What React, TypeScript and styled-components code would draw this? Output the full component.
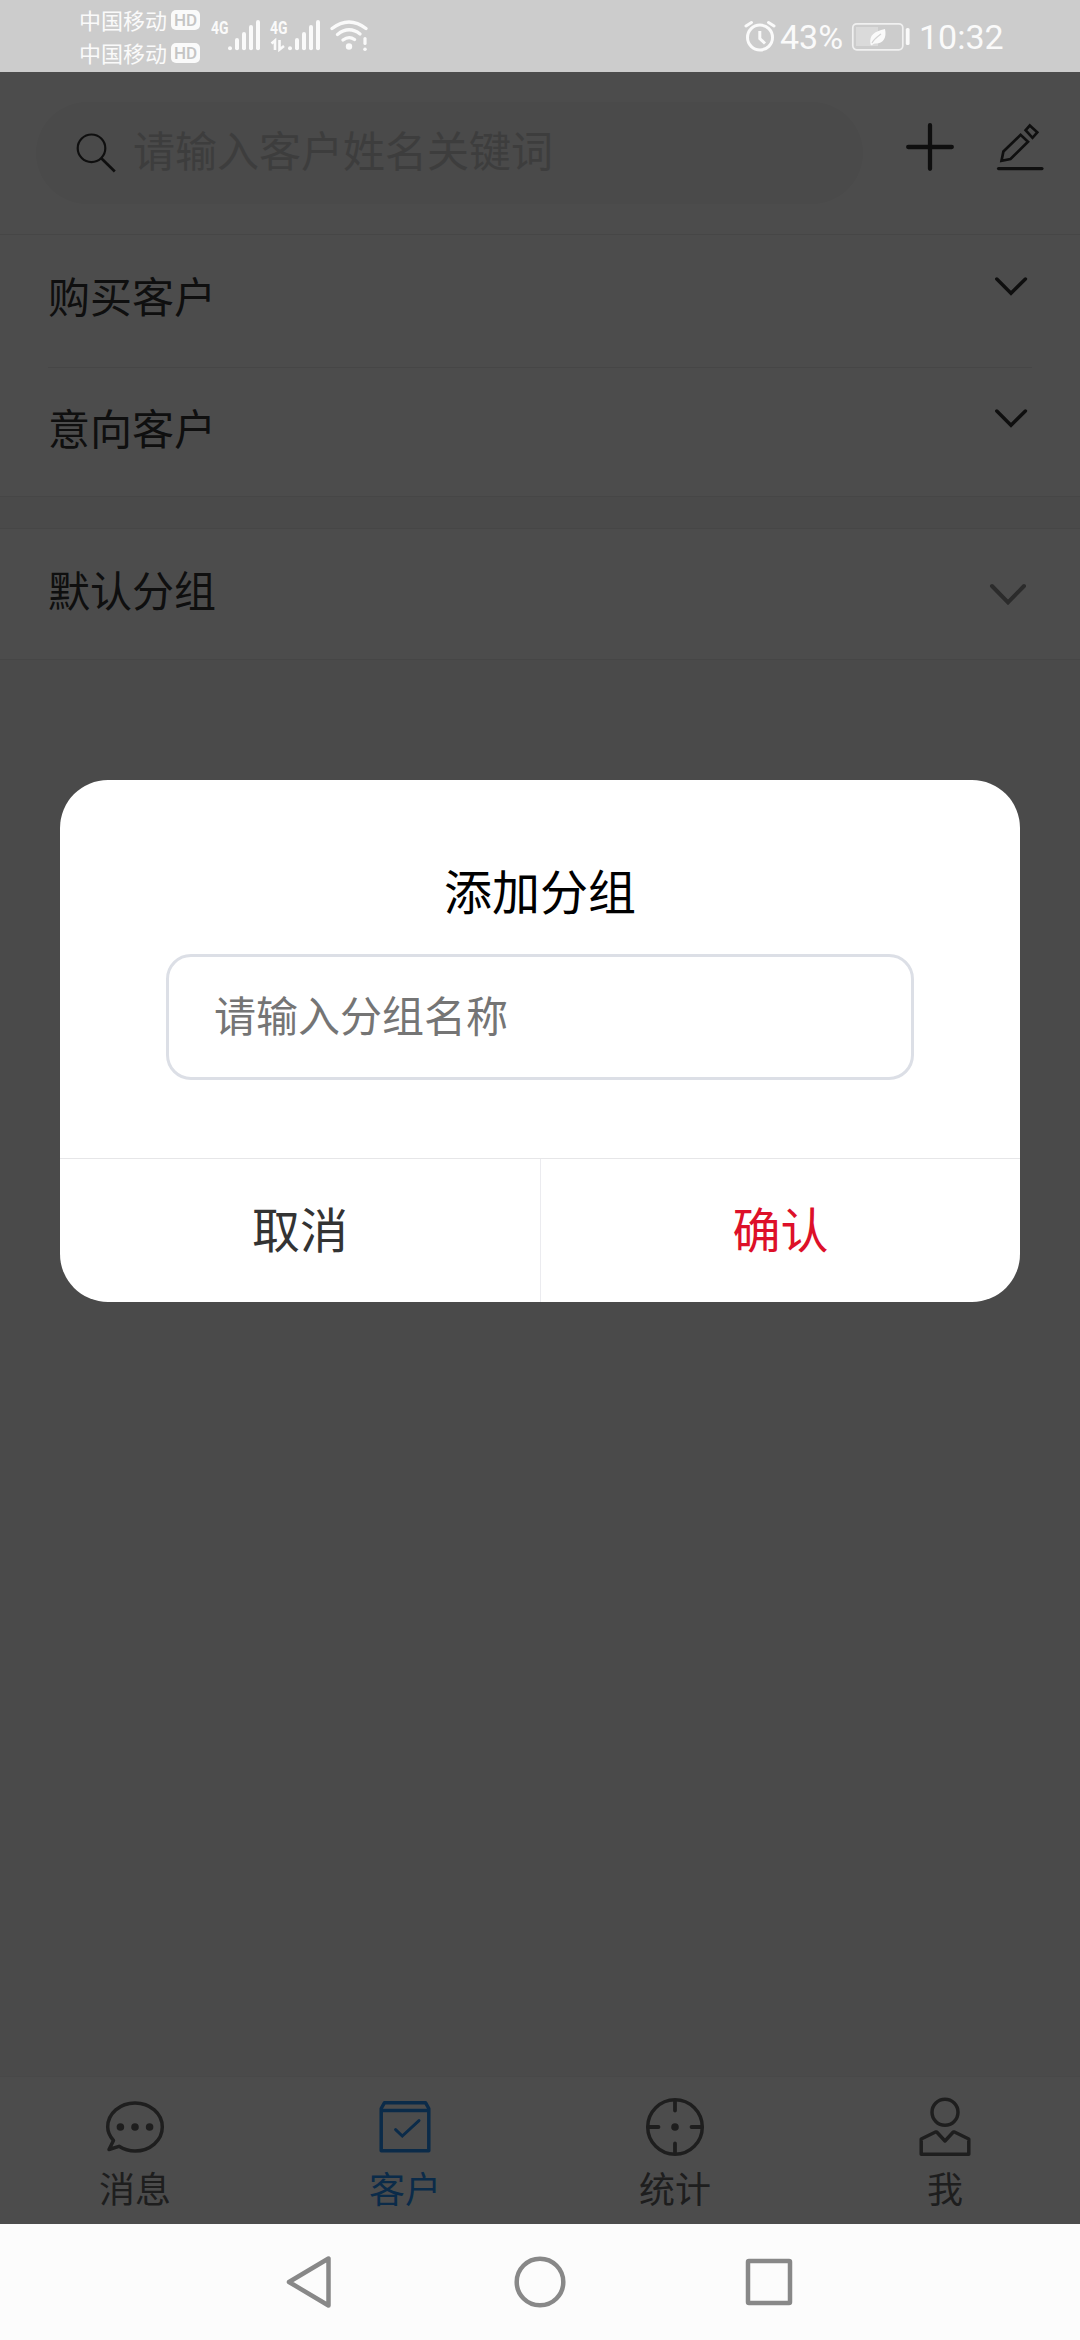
import React from "react";
import styled, { createGlobalStyle } from "styled-components";

const GlobalStyle = createGlobalStyle`
  * { box-sizing: border-box; }
  body { margin: 0; background: #fcfcfc; }
`;

const cjk = `"Noto Sans CJK SC", "Noto Sans", sans-serif`;

const Screen = styled.div`
  width: 1080px;
  height: 2340px;
  display: flex;
  flex-direction: column;
  overflow: hidden;
  font-family: ${cjk};
`;

/* ---------- status bar ---------- */

const StatusBar = styled.header`
  height: 72px;
  flex: none;
  display: flex;
  justify-content: space-between;
  padding: 0 76px 0 79px;
  background: #cccccc;
  color: #fafafa;
`;

const StatusGroup = styled.div`
  display: flex;
  align-items: center;
`;

const SignalGroup = styled.div`
  display: flex;
  align-items: center;
  gap: 9px;
`;

const Carriers = styled.div`
  display: flex;
  flex-direction: column;
  padding-bottom: 1px;
  margin-right: 9px;
`;

const Carrier = styled.div`
  display: flex;
  align-items: center;
  height: 33px;
  gap: 4px;
  font-size: 22px;
  line-height: 33px;
`;

const CarrierName = styled.span`
  height: 33px;
  line-height: 32px;
`;

const HdBadge = styled.span`
  width: 29px;
  height: 20px;
  margin-top: 2px;
  border-radius: 5px;
  background: #fafafa;
  color: #c4c4c4;
  font: 500 17px/20px Roboto, sans-serif;
  text-align: center;
`;

const StatusText = styled.span<{ $width: number; $gap: number }>`
  width: ${(p) => p.$width}px;
  margin-left: ${(p) => p.$gap}px;
  font: 400 34px/72px Roboto, sans-serif;
  white-space: nowrap;
  padding-top: 1px;
`;

/* ---------- page ---------- */

const Page = styled.main`
  position: relative;
  flex: 1;
  display: flex;
  flex-direction: column;
  background: #f7f7f7;
`;

const TopBar = styled.div`
  height: 163px;
  display: flex;
  align-items: center;
  padding: 0 36px;
  background: #fff;
  border-bottom: 1px solid #eaeaea;
`;

const SearchBox = styled.div`
  width: 828px;
  height: 102px;
  border-radius: 51px;
  background: #f7f7f7;
  display: flex;
  align-items: center;
  padding: 0 40px;
  gap: 16px;
`;

const SearchHint = styled.span`
  padding-bottom: 9px;
  font-size: 42px;
  line-height: 60px;
  color: #ccc;
`;

const Actions = styled.div`
  display: flex;
  align-items: center;
  gap: 41px;
  margin-left: 42px;
  padding-bottom: 12px;
`;

const List = styled.section<{ $gapTop?: number }>`
  margin-top: ${(p) => p.$gapTop ?? 0}px;
  background: #fff;
  border-bottom: 1px solid #eaeaea;
  border-top: ${(p) => (p.$gapTop ? "1px solid #eaeaea" : "none")};
`;

const Row = styled.div<{ $height: number }>`
  height: ${(p) => p.$height}px;
  display: flex;
  justify-content: space-between;
  padding: 0 48px;
`;

const RowTitle = styled.span<{ $top: number }>`
  padding-top: ${(p) => p.$top}px;
  font-size: 42px;
  line-height: 60px;
  color: #333;
`;

const RowArrow = styled.span<{ $top: number; $right: number }>`
  padding-top: ${(p) => p.$top}px;
  margin-right: ${(p) => p.$right}px;
`;

const Divider = styled.div`
  height: 1px;
  margin: 0 48px;
  background: #eaeaea;
`;

const TabBar = styled.nav`
  margin-top: auto;
  height: 148px;
  display: grid;
  grid-template-columns: repeat(4, 1fr);
  background: #fff;
  border-top: 1px solid #f2f2f2;
`;

const Tab = styled.div<{ $active?: boolean }>`
  display: flex;
  flex-direction: column;
  align-items: center;
  padding-top: 19px;
  font-size: 36px;
  line-height: 52px;
  color: ${(p) => (p.$active ? "#268ff5" : "#666")};
`;

const TabLabel = styled.span`
  margin-top: 1px;
`;

/* ---------- dialog ---------- */

const Backdrop = styled.div`
  position: absolute;
  inset: 0;
  display: flex;
  justify-content: center;
  align-items: flex-start;
  padding-top: 708px;
  background: rgba(0, 0, 0, 0.7);
`;

const Dialog = styled.div`
  width: 960px;
  height: 522px;
  border-radius: 48px;
  overflow: hidden;
  background: #fff;
  display: flex;
  flex-direction: column;
`;

const DialogBody = styled.div`
  height: 378px;
  display: flex;
  flex-direction: column;
  align-items: center;
  padding-top: 73px;
`;

const DialogTitle = styled.h2`
  margin: 0 0 29px;
  font-size: 48px;
  font-weight: 400;
  line-height: 72px;
  color: #000;
`;

const NameInput = styled.input`
  width: 748px;
  height: 126px;
  border: 3px solid #dcdfe6;
  border-radius: 25px;
  padding: 0 45px 8px;
  font: 400 42px/60px ${cjk};
  outline: none;
  background: #fff;
  &::placeholder { color: #757575; opacity: 1; }
`;

const DialogActions = styled.div`
  flex: 1;
  display: grid;
  grid-template-columns: 1fr 1fr;
  border-top: 1px solid #e6e6e8;
`;

const DialogButton = styled.button<{ $primary?: boolean }>`
  border: 0;
  border-left: ${(p) => (p.$primary ? "1px solid #ebebef" : "none")};
  background: none;
  padding: 0 0 8px;
  font: 400 48px/72px ${cjk};
  color: ${(p) => (p.$primary ? "#dd1029" : "#333")};
`;

/* ---------- system navigation ---------- */

const SystemNav = styled.footer`
  height: 116px;
  flex: none;
  display: flex;
  justify-content: center;
  align-items: center;
  gap: 175px;
  background: #fcfcfc;
`;

/* ---------- icons ---------- */

const Icon = styled.svg`
  display: block;
  flex: none;
  overflow: visible;
`;

const Signal = ({ data }: { data?: boolean }) => (
  <Icon width={data ? 52 : 51} height={72} viewBox={data ? "-1 0 52 72" : "0 0 51 72"}>
    <text x={data ? 0 : 2} y="33.5" fontFamily="Roboto, sans-serif" fontWeight="700" fontSize="19" fill="#fafafa" textLength="17.5" lengthAdjust="spacingAndGlyphs">4G</text>
    {data && (
      <path d="M1.5 43.5L5 40.5V50M9.5 40V49.5L14 46" fill="none" stroke="#fafafa" strokeWidth="2.6" />
    )}
    {[48.2, 40, 34, 27, 22].map((y, i) => (
      <path key={y} d={`M${21 + i * 7 - (data ? 1 : 0)} ${y}V48.3`} stroke="#fafafa" strokeWidth="4" strokeLinecap="round" />
    ))}
  </Icon>
);

const Wifi = () => (
  <Icon width={38} height={72} viewBox="0 0 38 72" fill="none" stroke="#fafafa" strokeLinecap="round">
    <path d="M2 28.5Q19 15.500 36 28.500" strokeWidth="3.400" />
    <path d="M7.500 34.500Q19 25.500 30 34" strokeWidth="3.400" />
    <path d="M13 40Q19 35.500 24.500 39.500" strokeWidth="3.400" />
    <circle cx="19" cy="46.500" r="3.200" fill="#fafafa" stroke="none" />
    <path d="M35 38.500V43.500" strokeWidth="3.200" />
    <circle cx="35" cy="49.300" r="1.800" fill="#fafafa" stroke="none" />
  </Icon>
);

const Alarm = () => (
  <Icon width={32} height={72} viewBox="0 0 32 72" fill="none" stroke="#fafafa">
    <circle cx="16" cy="37.500" r="12.500" strokeWidth="3" />
    <path d="M15.800 31V38.500L21 43.500" strokeWidth="3" />
    <path d="M2 26L7.500 22.500M30 26L24.500 22.500" strokeWidth="3" strokeLinecap="round" />
  </Icon>
);

const Battery = () => (
  <Icon width={58} height={72} viewBox="0 0 58 72">
    <rect x="0.800" y="23.800" width="50" height="26" rx="4" fill="none" stroke="#f0f0f0" strokeWidth="1.700" />
    <path d="M4 27H26V46H4Z" fill="#dadada" />
    <path d="M33 29C35 38 31 44 23 43.500C21.500 43.700 20.500 44.500 20 45.500L18.500 44.500C17 35 22 31.500 33 29Z" fill="#fafafa" />
    <path d="M20 43C22 39 25 37 29 34" fill="none" stroke="#d4d4d4" strokeWidth="1.200" />
    <rect x="53.800" y="28" width="3.800" height="17" rx="1.600" fill="#fafafa" />
  </Icon>
);

const Search = () => (
  <Icon width={41} height={42} viewBox="76 132 41 42" fill="none" stroke="#333" strokeWidth="2.200">
    <circle cx="91.500" cy="148.300" r="13.800" />
    <path d="M101.300 158.200L114.800 171.500" strokeWidth="2.700" />
  </Icon>
);

const Plus = () => (
  <Icon width={50} height={50} viewBox="0 0 50 50" stroke="#333" strokeWidth="4.300" strokeLinecap="round">
    <path d="M25 3.200V46.800M3.200 25H46.800" />
  </Icon>
);

const Pencil = () => (
  <Icon width={48} height={50} viewBox="996 122 48 50" fill="none" stroke="#333" strokeWidth="2.700">
    <path d="M1001.500 160.800L1003.400 151.500L1020.600 134.800L1028 141.700L1010.500 159Z" />
    <path d="M1029.800 125.500L1037.300 132.300L1032.500 137.800L1025.600 130.200Z" />
    <path d="M998.500 168.600H1042" strokeWidth="3.200" strokeLinecap="round" />
  </Icon>
);

const Chevron = ({ light }: { light?: boolean }) =>
  light ? (
    <Icon width={36} height={21} viewBox="0 0 36 21" fill="none" stroke="#8f8f8f" strokeWidth="4" strokeLinecap="round">
      <path d="M2 2L18 18.500L34 2" />
    </Icon>
  ) : (
    <Icon width={32} height={19} viewBox="0 0 32 19" fill="none" stroke="#333" strokeWidth="3.500" strokeLinecap="round">
      <path d="M1.800 2L16 16.200L30.400 2" />
    </Icon>
  );

const TabIcon = ({ children }: { children: React.ReactNode }) => (
  <Icon width={60} height={64} viewBox="-30 -31 60 64" fill="none" stroke="currentColor" strokeWidth="3.500" strokeLinejoin="round" strokeLinecap="round">
    {children}
  </Icon>
);

const MessageIcon = () => (
  <TabIcon>
    <path d="M-21.500 13.500C-25.500 9 -27.300 5 -27.300 0C-27.300 -13.500 -15 -24 0 -24S27.300 -13.500 27.300 0S15 24 0 24C-6 24 -11 22.500 -16 19.300L-26 22.500Z" />
    {[-14.600, 0, 14.600].map((x) => (
      <circle key={x} cx={x} cy="0" r="3.800" fill="currentColor" stroke="none" />
    ))}
  </TabIcon>
);

const CustomerIcon = () => (
  <TabIcon>
    <path d="M-23.800 -18.500L-20.500 -24.300H20.500L23.800 -18.500V23.800H-23.800ZM-23.800 -16.600H23.800" />
    <path d="M-9.400 2.600L-2.700 9L14 -6.400" strokeWidth="3" strokeLinejoin="miter" />
  </TabIcon>
);

const StatsIcon = () => (
  <TabIcon>
    <circle cx="0" cy="0" r="27.300" />
    <path d="M0 -26V-16.500M0 26V16.500M-26 0H-16.500M26 0H16.500" strokeWidth="3.800" />
    <circle cx="0" cy="0" r="3.800" fill="currentColor" stroke="none" />
  </TabIcon>
);

const MeIcon = () => (
  <TabIcon>
    <circle cx="0" cy="-14.700" r="13" />
    <path d="M-23.800 12L-9.500 5H-8.300L0 14L8.300 5H9.500L23.800 12V27.300H-23.800Z" />
  </TabIcon>
);

const NavIcon = ({ children }: { children: React.ReactNode }) => (
  <Icon width={54} height={54} viewBox="-27 -27 54 54" fill="none" stroke="#888" strokeWidth="4.500" strokeLinejoin="round">
    {children}
  </Icon>
);

export default function App() {
  return (
    <Screen>
      <GlobalStyle />
      <StatusBar>
        <StatusGroup>
          <Carriers>
            {[0, 1].map((sim) => (
              <Carrier key={sim}>
                <CarrierName>中国移动</CarrierName>
                <HdBadge>HD</HdBadge>
              </Carrier>
            ))}
          </Carriers>
          <SignalGroup>
            <Signal />
            <Signal data />
            <Wifi />
          </SignalGroup>
        </StatusGroup>
        <StatusGroup>
          <Alarm />
          <StatusText $width={72} $gap={4}>43%</StatusText>
          <Battery />
          <StatusText $width={85} $gap={9}>10:32</StatusText>
        </StatusGroup>
      </StatusBar>

      <Page>
        <TopBar>
          <SearchBox>
            <Search />
            <SearchHint>请输入客户姓名关键词</SearchHint>
          </SearchBox>
          <Actions>
            <Plus />
            <Pencil />
          </Actions>
        </TopBar>
        <List>
          <Row $height={132}>
            <RowTitle $top={30}>购买客户</RowTitle>
            <RowArrow $top={42} $right={5}><Chevron /></RowArrow>
          </Row>
          <Divider />
          <Row $height={128}>
            <RowTitle $top={29}>意向客户</RowTitle>
            <RowArrow $top={41} $right={5}><Chevron /></RowArrow>
          </Row>
        </List>
        <List $gapTop={31}>
          <Row $height={130}>
            <RowTitle $top={30}>默认分组</RowTitle>
            <RowArrow $top={55} $right={6}><Chevron light /></RowArrow>
          </Row>
        </List>
        <TabBar>
          <Tab><MessageIcon /><TabLabel>消息</TabLabel></Tab>
          <Tab $active><CustomerIcon /><TabLabel>客户</TabLabel></Tab>
          <Tab><StatsIcon /><TabLabel>统计</TabLabel></Tab>
          <Tab><MeIcon /><TabLabel>我</TabLabel></Tab>
        </TabBar>

        <Backdrop>
          <Dialog role="dialog">
            <DialogBody>
              <DialogTitle>添加分组</DialogTitle>
              <NameInput placeholder="请输入分组名称" />
            </DialogBody>
            <DialogActions>
              <DialogButton>取消</DialogButton>
              <DialogButton $primary>确认</DialogButton>
            </DialogActions>
          </Dialog>
        </Backdrop>
      </Page>

      <SystemNav>
        <NavIcon><path d="M-22 0L17.500 -23.500V23.500Z" /></NavIcon>
        <NavIcon><circle r="23.300" /></NavIcon>
        <NavIcon><rect x="-21" y="-21" width="42" height="42" rx="1" /></NavIcon>
      </SystemNav>
    </Screen>
  );
}
